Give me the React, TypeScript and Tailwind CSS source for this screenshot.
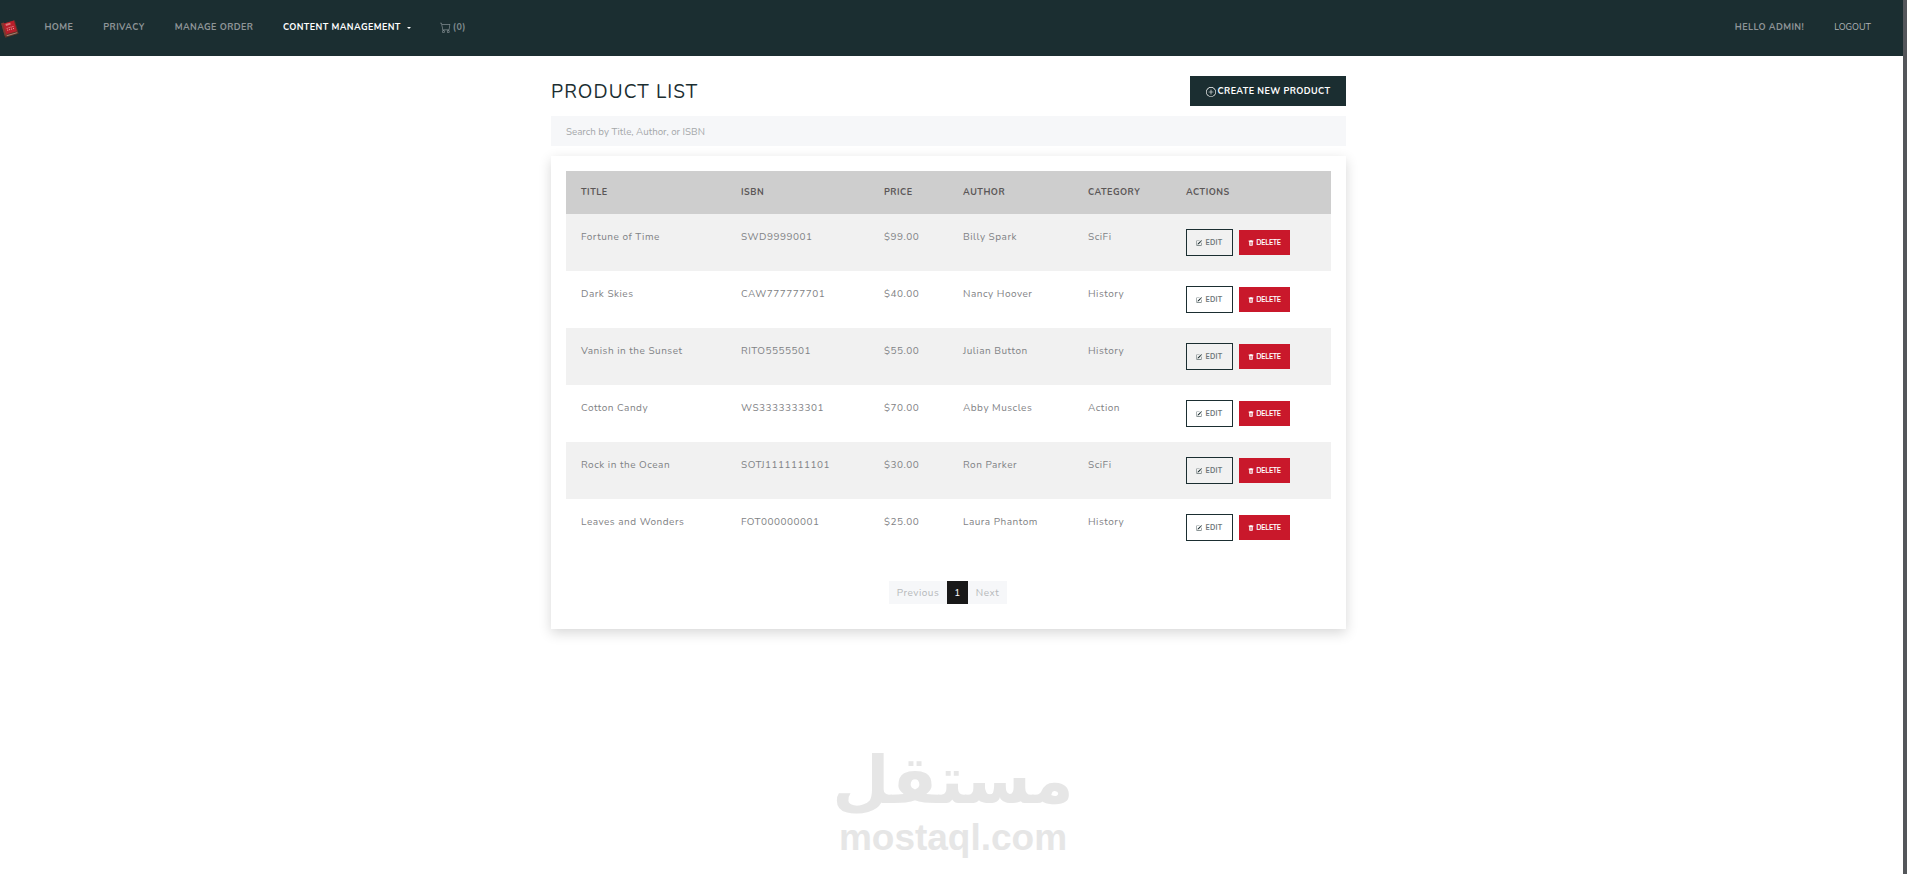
import { BsCart, BsPencilSquare, BsPlusCircle, BsTrashFill } from 'react-icons/bs';

const products = [
  { title: 'Fortune of Time', isbn: 'SWD9999001', price: '$99.00', author: 'Billy Spark', category: 'SciFi' },
  { title: 'Dark Skies', isbn: 'CAW777777701', price: '$40.00', author: 'Nancy Hoover', category: 'History' },
  { title: 'Vanish in the Sunset', isbn: 'RITO5555501', price: '$55.00', author: 'Julian Button', category: 'History' },
  { title: 'Cotton Candy', isbn: 'WS3333333301', price: '$70.00', author: 'Abby Muscles', category: 'Action' },
  { title: 'Rock in the Ocean', isbn: 'SOTJ1111111101', price: '$30.00', author: 'Ron Parker', category: 'SciFi' },
  { title: 'Leaves and Wonders', isbn: 'FOT000000001', price: '$25.00', author: 'Laura Phantom', category: 'History' },
];

function BookLogo() {
  return (
    <svg width="18" height="20" viewBox="0 0 18 20" className="shrink-0">
      <g transform="rotate(-16 9 10)">
        <rect x="2" y="3" width="14" height="14" fill="#5e3328" />
        <rect x="2" y="2" width="3" height="13" fill="#7d3a30" />
        <rect x="4" y="3" width="11" height="11" fill="#b81f2b" />
        <rect x="6" y="4" width="5" height="2" fill="#d97878" />
        <rect x="6" y="8" width="1" height="1" fill="#eba9a9" />
        <rect x="8" y="8" width="1" height="1" fill="#eba9a9" />
        <rect x="10" y="8" width="1" height="1" fill="#eba9a9" />
        <rect x="12" y="8" width="1" height="1" fill="#eba9a9" />
        <rect x="6" y="10" width="1" height="1" fill="#eba9a9" />
        <rect x="8" y="10" width="1" height="1" fill="#eba9a9" />
        <rect x="10" y="10" width="1" height="1" fill="#eba9a9" />
        <rect x="12" y="10" width="1" height="1" fill="#eba9a9" />
        <rect x="4" y="15" width="11" height="1" fill="#a98a78" />
      </g>
    </svg>
  );
}

export default function App() {
  return (
    <div className="flex h-[874px] w-[1907px] overflow-hidden bg-[#54565a]">
      <div className="relative h-full w-[1903px] bg-white font-['Nunito','Lato',sans-serif]">
        <nav className="flex h-[56px] items-center bg-[#1b2e31] pb-[1px] text-[9px] font-bold tracking-[0.4px] text-[#8f9598] uppercase">
          <div className="ml-[1px] w-[43.5px] pt-[2px]">
            <BookLogo />
          </div>
          <a>Home</a>
          <a className="ml-[30px]">Privacy</a>
          <a className="ml-[30px]">Manage Order</a>
          <a className="ml-[29.5px] flex items-center text-white">
            Content Management
            <span className="ml-[6px] h-0 w-0 border-x-[2px] border-t-[2px] border-x-transparent border-t-white" />
          </a>
          <a className="ml-[29px] flex items-center gap-[2px] text-[#7f8a8e]">
            <BsCart className="text-[11px]" />
            <span>(0)</span>
          </a>
          <span className="ml-auto">Hello Admin!</span>
          <a className="mr-[32px] ml-[30px] text-[9px] font-normal tracking-[0px] text-[#b0b4b6]">Logout</a>
        </nav>

        <main className="ml-[551px] w-[795px]">
          <div className="mt-[20px] flex h-[30px] items-center justify-between">
            <h1 className="pt-[3px] text-[19px] font-normal tracking-[1.1px] text-[#1b2e31] uppercase">Product List</h1>
            <button className="flex h-[30px] w-[156px] items-center justify-center gap-[2px] bg-[#1b2e31] pt-[1px] text-[9px] font-bold tracking-[0.4px] text-white uppercase">
              <BsPlusCircle className="text-[10px]" />
              Create New Product
            </button>
          </div>

          <input
            placeholder="Search by Title, Author, or ISBN"
            className="mt-[10px] block h-[30px] w-full bg-[#f6f7f9] px-[15px] text-[9.75px] placeholder:text-[#a5a7aa]"
          />

          <section className="mt-[10px] h-[473px] bg-white p-[15px] shadow-[0_4px_12px_rgba(0,0,0,0.16)]">
            <table className="w-[765px] table-fixed border-collapse">
              <colgroup>
                <col className="w-[160px]" />
                <col className="w-[143px]" />
                <col className="w-[79px]" />
                <col className="w-[125px]" />
                <col className="w-[98px]" />
                <col className="w-[160px]" />
              </colgroup>
              <thead>
                <tr className="h-[43px] bg-[#cecece] text-left text-[9px] font-bold tracking-[0.5px] text-[#5b5757] uppercase">
                  <th className="px-[15px] pt-[1px] font-bold">Title</th>
                  <th className="px-[15px] pt-[1px] font-bold">ISBN</th>
                  <th className="px-[15px] pt-[1px] font-bold">Price</th>
                  <th className="px-[15px] pt-[1px] font-bold">Author</th>
                  <th className="px-[15px] pt-[1px] font-bold">Category</th>
                  <th className="px-[15px] pt-[1px] font-bold">Actions</th>
                </tr>
              </thead>
              <tbody>
                {products.map((p) => (
                  <tr key={p.isbn} className="h-[57px] align-top text-[10px] leading-[15px] tracking-[0.5px] text-[#7f8285] odd:bg-[#f1f1f1]">
                    <td className="px-[15px] pt-[16px]">{p.title}</td>
                    <td className="px-[15px] pt-[16px]">{p.isbn}</td>
                    <td className="px-[15px] pt-[16px]">{p.price}</td>
                    <td className="px-[15px] pt-[16px]">{p.author}</td>
                    <td className="px-[15px] pt-[16px]">{p.category}</td>
                    <td className="px-[15px] pt-[15px]">
                      <div className="flex items-center gap-[6px]">
                        <button className="flex h-[27px] w-[47px] items-center justify-center gap-[3px] border border-[#1b2e31] text-[7px] font-bold tracking-[0.3px] text-[#6b7477] uppercase">
                          <BsPencilSquare className="text-[6px] text-[#1b2e31]" />
                          Edit
                        </button>
                        <button className="flex h-[25px] w-[51px] items-center justify-center gap-[2px] bg-[#c9182b] text-[7px] font-bold tracking-[-0.3px] text-white uppercase">
                          <BsTrashFill className="text-[6px]" />
                          Delete
                        </button>
                      </div>
                    </td>
                  </tr>
                ))}
              </tbody>
            </table>

            <div className="mt-[25px] flex h-[23px] justify-center pr-[1px] text-[10px] tracking-[0.5px] text-[#b5b7ba]">
              <span className="flex w-[58px] items-center justify-center bg-[#f6f7f9] pt-[1px]">Previous</span>
              <span className="flex w-[21px] items-center justify-center bg-[#181818] pt-[1px] text-white">1</span>
              <span className="flex w-[39px] items-center justify-center bg-[#f6f7f9] pt-[1px]">Next</span>
            </div>
          </section>
        </main>

        <div className="absolute top-[745px] left-[838px] flex w-[230px] flex-col items-center text-[#e6e6e6]">
          <span dir="rtl" className="font-['DejaVu_Sans',sans-serif] text-[66px] leading-[72px] font-bold">مستقل</span>
          <span className="font-['Liberation_Sans',sans-serif] text-[37px] leading-[42px] font-bold">mostaql.com</span>
        </div>
      </div>
    </div>
  );
}
